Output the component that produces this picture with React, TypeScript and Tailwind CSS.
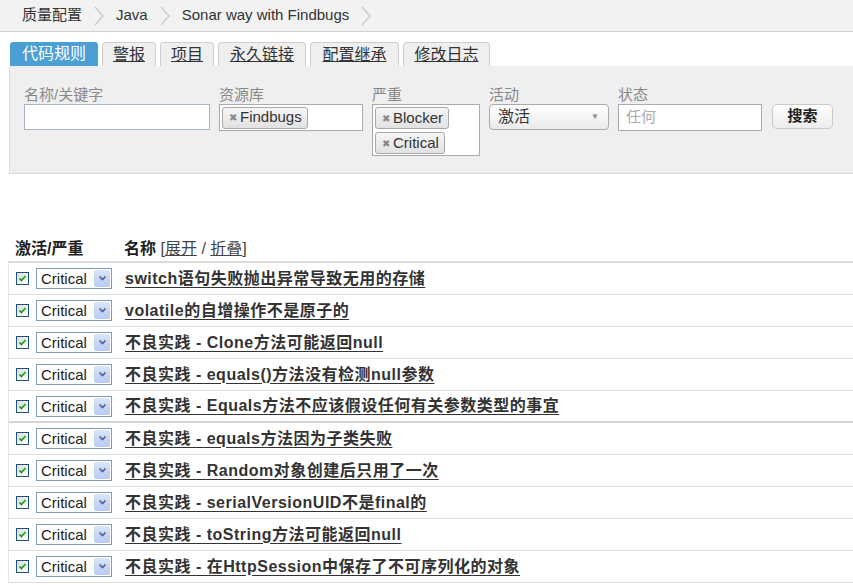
const font = "font-['Liberation_Sans','Noto_Sans_CJK_SC',sans-serif]";

const rules = [
  { name: "switch语句失败抛出异常导致无用的存储" },
  { name: "volatile的自增操作不是原子的" },
  { name: "不良实践 - Clone方法可能返回null" },
  { name: "不良实践 - equals()方法没有检测null参数" },
  { name: "不良实践 - Equals方法不应该假设任何有关参数类型的事宜", thick: true },
  { name: "不良实践 - equals方法因为子类失败" },
  { name: "不良实践 - Random对象创建后只用了一次" },
  { name: "不良实践 - serialVersionUID不是final的" },
  { name: "不良实践 - toString方法可能返回null" },
  { name: "不良实践 - 在HttpSession中保存了不可序列化的对象" },
];

const tabs = [
  { label: "警报", w: "w-[54px]" },
  { label: "项目", w: "w-[54px]" },
  { label: "永久链接", w: "w-[88px]" },
  { label: "配置继承", w: "w-[89px]" },
  { label: "修改日志", w: "w-[87px]" },
];

const Chevron = () => (
  <svg width="12" height="22" viewBox="0 0 12 22" className="mx-[11px]">
    <polyline points="2,2 10,11 2,20" fill="none" stroke="#c8c8c8" strokeWidth="1.3" />
  </svg>
);

const Token = ({ label }: { label: string }) => (
  <span className="flex h-[22px] items-center gap-[3px] rounded-[3px] border border-[#aaa] bg-gradient-to-b from-[#f6f6f6] to-[#e2e2e2] pl-[6px] pr-[5px] text-[15px] text-[#333]">
    <span className="text-[10px] text-[#888]">✖</span>
    {label}
  </span>
);

const Checkbox = () => (
  <span className="flex h-[13px] w-[13px] items-center justify-center border border-[#1c5180] bg-gradient-to-br from-[#dcdcd6] to-white">
    <svg width="9" height="9" viewBox="0 0 9 9">
      <polyline points="1.5,4.5 3.5,6.5 7.5,2" fill="none" stroke="#21a121" strokeWidth="1.8" />
    </svg>
  </span>
);

const SeveritySelect = () => (
  <span className="flex h-[21px] w-[76px] items-center border border-[#7f9db9] bg-white">
    <span className="flex-1 pl-[4px] text-[15px] leading-none text-[#222]">Critical</span>
    <span className="mr-[1px] flex h-[17px] w-[16px] items-center justify-center rounded-[2px] bg-gradient-to-b from-[#dbe4fb] to-[#b7c9f4]">
      <svg width="9" height="7" viewBox="0 0 9 7">
        <polyline points="1.5,1.5 4.5,4.5 7.5,1.5" fill="none" stroke="#4d6185" strokeWidth="1.6" />
      </svg>
    </span>
  </span>
);

export default function App() {
  return (
    <div className={`${font} min-h-[585px] w-[853px] overflow-hidden bg-white text-[#333]`}>
      {/* breadcrumb */}
      <div className="flex h-[32px] items-center border-b border-[#cfcfcf] bg-[#f2f2f2] pl-[22px] text-[15px] text-[#333]">
        <span>质量配置</span>
        <Chevron />
        <span>Java</span>
        <Chevron />
        <span>Sonar way with Findbugs</span>
        <Chevron />
      </div>

      {/* tabs */}
      <div className="mt-[10px] flex gap-[4px] pl-[10px]">
        <span className="flex h-[24px] w-[88px] items-center justify-center rounded-t-[3px] bg-[#4b9fd5] text-[16px] text-white">
          代码规则
        </span>
        {tabs.map((t) => (
          <span
            key={t.label}
            className={`flex h-[24px] ${t.w} items-center justify-center rounded-t-[4px] border border-b-0 border-[#cdcdcd] bg-[#efefef] text-[16px] text-[#333] underline`}
          >
            {t.label}
          </span>
        ))}
      </div>

      {/* filters */}
      <div className="ml-[9px] flex h-[108px] gap-[9px] border-b border-l border-[#dcdcdc] bg-[#efefef] pl-[14px] pt-[19px] text-[15px]">
        <div className="flex w-[186px] flex-col">
          <span className="h-[19px] leading-[19px] text-[#888]">名称/关键字</span>
          <span className="h-[26px] border border-[#a6b4c6] bg-white" />
        </div>
        <div className="flex w-[144px] flex-col">
          <span className="h-[19px] leading-[19px] text-[#888]">资源库</span>
          <span className="flex h-[27px] items-center border border-[#aaa] bg-white pl-[2px]">
            <Token label="Findbugs" />
          </span>
        </div>
        <div className="flex w-[108px] flex-col">
          <span className="h-[19px] leading-[19px] text-[#888]">严重</span>
          <span className="flex h-[52px] flex-col items-start gap-[3px] border border-[#aaa] bg-white pl-[2px] pt-[2px]">
            <Token label="Blocker" />
            <Token label="Critical" />
          </span>
        </div>
        <div className="flex w-[120px] flex-col">
          <span className="h-[19px] leading-[19px] text-[#888]">活动</span>
          <span className="flex h-[26px] items-center justify-between rounded-[4px] border border-[#aaa] bg-gradient-to-b from-white to-[#eaeaea] pl-[8px] pr-[9px] text-[16px] text-[#333]">
            激活
            <span className="text-[8px] text-[#888]">▼</span>
          </span>
        </div>
        <div className="flex w-[144px] flex-col">
          <span className="h-[19px] leading-[19px] text-[#888]">状态</span>
          <span className="flex h-[27px] items-center border border-[#aaa] bg-white pl-[7px] text-[15px] text-[#aaa]">
            任何
          </span>
        </div>
        <div className="flex flex-col pl-[1px] pt-[19px]">
          <span className="flex h-[25px] w-[61px] items-center justify-center rounded-[5px] border border-[#c9c9c9] bg-gradient-to-b from-white to-[#ececec] text-[15px] font-bold text-[#222]">
            搜索
          </span>
        </div>
      </div>

      {/* rules table */}
      <div className="ml-[8px] mt-[63px]">
        <div className="flex h-[26px] items-center border-b-2 border-[#dcdcdc] text-[16px] font-bold text-[#222]">
          <span className="w-[116px] pl-[7px]">激活/严重</span>
          <span>
            名称{" "}
            <span className="font-normal text-[#444]">
              [<span className="underline">展开</span> / <span className="underline">折叠</span>]
            </span>
          </span>
        </div>
        {rules.map((r) => (
          <div
            key={r.name}
            className={`flex h-[32px] items-center border-l border-[#e4e4e4] ${r.thick ? "border-b-2 border-b-[#d6d6d6]" : "border-b border-b-[#dcdcdc]"}`}
          >
            <span className="ml-[7px] mr-[7px]">
              <Checkbox />
            </span>
            <SeveritySelect />
            <span className="ml-[13px] text-[16px] font-bold tracking-[0.5px] text-[#333] underline decoration-[#333] underline-offset-[3px]">
              {r.name}
            </span>
          </div>
        ))}
      </div>
    </div>
  );
}
